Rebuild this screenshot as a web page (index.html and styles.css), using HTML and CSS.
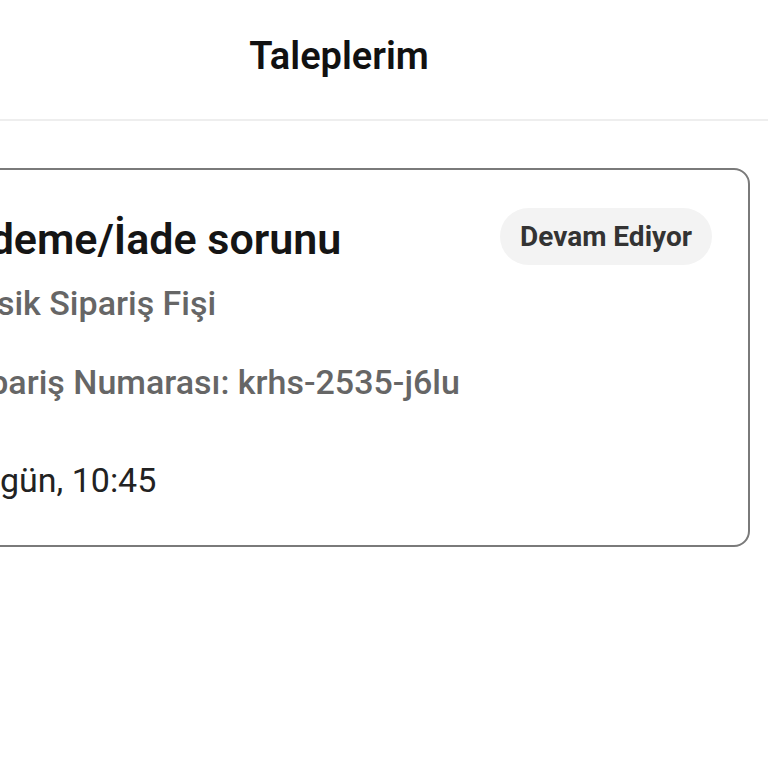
FILE: index.html
```html
<!DOCTYPE html>
<html lang="tr">

<head>
    <meta charset="UTF-8">
    <meta name="viewport" content="width=device-width, initial-scale=1.0">
    <title>Taleplerim</title>
    <link rel="stylesheet" href="styles.css">
</head>

<body>
    <div class="page">
        <header class="topbar">
            <h1>Taleplerim</h1>
        </header>

        <main class="list">
            <div class="ticket">
                <div class="ticket-head">
                    <h2>Ödeme/İade sorunu</h2>
                    <span class="status">Devam Ediyor</span>
                </div>
                <p class="reason">Eksik Sipariş Fişi</p>
                <p class="order">Sipariş Numarası: krhs-2535-j6lu</p>
                <p class="date">Bugün, 10:45</p>
            </div>
        </main>
    </div>
</body>

</html>
```

FILE: styles.css
```css
* {
    margin: 0;
    padding: 0;
    box-sizing: border-box;
    font-family: Roboto, 'Noto Sans', sans-serif;
}

body {
    background: white;
    overflow: hidden;
}

.page {
    width: 858px;
    margin-left: -90px;
}

.topbar {
    height: 121px;
    display: flex;
    justify-content: center;
    align-items: center;
    border-bottom: 2px solid #eeeeee;
}

.topbar h1 {
    font-size: 38px;
    font-weight: 600;
    color: #111;
    margin-top: -8px;
}

.list {
    padding: 47px 18px;
}

.ticket {
    border: 2px solid #7a7a7a;
    border-radius: 16px;
    padding: 38px 36px 45px 30px;
}

.ticket-head {
    display: flex;
    justify-content: space-between;
    align-items: center;
}

.ticket-head h2 {
    font-size: 43px;
    font-weight: 600;
    color: #151515;
    margin-top: 4px;
}

.status {
    background: #f3f3f3;
    color: #333;
    font-size: 28px;
    font-weight: 700;
    padding: 12px 20px;
    border-radius: 30px;
}

.reason {
    font-size: 34px;
    font-weight: 500;
    color: #666;
    margin-top: 18px;
}

.order {
    font-size: 34px;
    font-weight: 500;
    color: #666;
    margin-top: 39px;
}

.date {
    font-size: 34px;
    color: #222;
    margin-top: 58px;
}
```
